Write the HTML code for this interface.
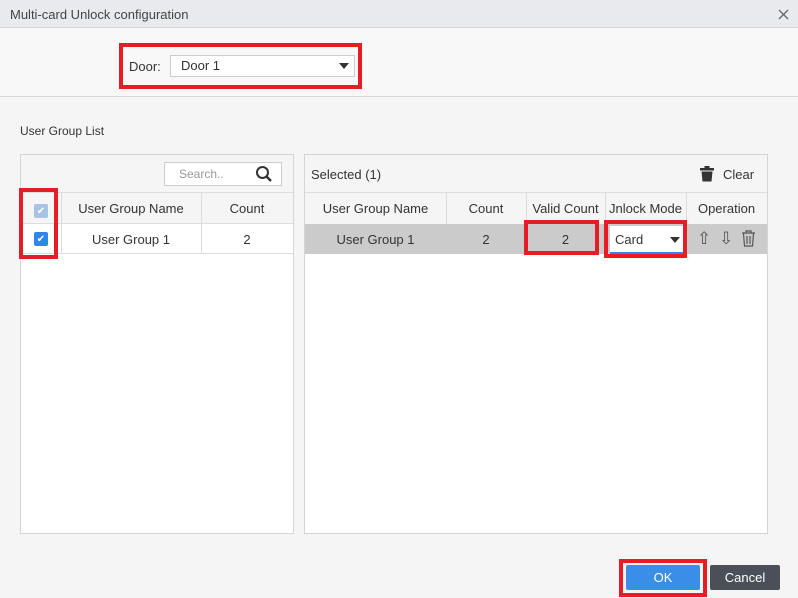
<!DOCTYPE html><html><head><style>
*{margin:0;padding:0;box-sizing:border-box}
body{width:798px;height:598px;position:relative;background:#f5f5f5;font-family:"Liberation Sans",sans-serif;font-size:13px;color:#333;overflow:hidden}
.a{position:absolute}
.c{display:flex;align-items:center;justify-content:center}
.red{position:absolute;border:4px solid #e81c24}
</style></head><body>
<div class="a" style="left:0;top:0;width:798px;height:28px;background:#e8eaed;border-bottom:1px solid #d5d5d5"></div>
<div class="a" style="left:10px;top:7px;font-size:13px;color:#444">Multi-card Unlock configuration</div>
<svg class="a" style="left:778px;top:9px" width="11" height="11"><path d="M1 1L10 10M10 1L1 10" stroke="#666" stroke-width="1.3"/></svg>
<div class="a" style="left:0;top:28px;width:798px;height:69px;background:#f8f8f8;border-bottom:1px solid #d8d8d8"></div>
<div class="red" style="left:119px;top:43px;width:243px;height:46px"></div>
<div class="a" style="left:129px;top:59px">Door:</div>
<div class="a" style="left:170px;top:55px;width:185px;height:22px;background:#fff;border:1px solid #ccc"></div>
<div class="a" style="left:181px;top:58px">Door 1</div>
<div class="a" style="left:339px;top:63px;border-left:5px solid transparent;border-right:5px solid transparent;border-top:6px solid #333"></div>
<div class="a" style="left:20px;top:124px;font-size:12px">User Group List</div>
<div class="a" style="left:20px;top:154px;width:274px;height:380px;background:#fff;border:1px solid #d5d5d5"></div>
<div class="a" style="left:21px;top:155px;width:272px;height:38px;background:#f5f5f5;border-bottom:1px solid #ddd"></div>
<div class="a" style="left:164px;top:162px;width:118px;height:24px;background:#fff;border:1px solid #ccc"></div>
<div class="a" style="left:179px;top:167px;color:#999;font-size:12px">Search..</div>
<svg class="a" style="left:255px;top:165px" width="18" height="18"><circle cx="7.5" cy="7.5" r="5.5" fill="none" stroke="#333" stroke-width="2"/><line x1="11.5" y1="11.5" x2="16" y2="16" stroke="#333" stroke-width="2.4"/></svg>
<div class="a" style="left:21px;top:193px;width:272px;height:31px;background:#f5f5f5;border-bottom:1px solid #ddd"></div>
<div class="a" style="left:61px;top:193px;width:1px;height:61px;background:#ddd"></div>
<div class="a" style="left:201px;top:193px;width:1px;height:61px;background:#ddd"></div>
<div class="a" style="left:21px;top:253px;width:272px;height:1px;background:#ddd"></div>
<div class="a c" style="left:61px;top:193px;width:140px;height:31px">User Group Name</div>
<div class="a c" style="left:201px;top:193px;width:92px;height:31px">Count</div>
<div class="a c" style="left:61px;top:224px;width:140px;height:30px">User Group 1</div>
<div class="a c" style="left:201px;top:224px;width:92px;height:30px">2</div>
<div class="a c" style="left:34px;top:204px;width:14px;height:14px;background:#a9c3e3;color:#fff;font-size:10px;border-radius:2px">✔</div>
<div class="a c" style="left:34px;top:232px;width:14px;height:14px;background:#2f86e8;color:#fff;font-size:10px;border-radius:2px">✔</div>
<div class="red" style="left:19px;top:188px;width:39px;height:71px"></div>
<div class="a" style="left:304px;top:154px;width:464px;height:380px;background:#fff;border:1px solid #d5d5d5"></div>
<div class="a" style="left:305px;top:155px;width:462px;height:38px;background:#f5f5f5;border-bottom:1px solid #ddd"></div>
<div class="a" style="left:311px;top:167px">Selected (1)</div>
<svg class="a" style="left:700px;top:166px" width="14" height="16"><rect x="0" y="2" width="14" height="2.5" fill="#333"/><rect x="4.5" y="0" width="5" height="3" fill="#333"/><path d="M1.5 5.5h11l-1 10h-9z" fill="#333"/></svg>
<div class="a" style="left:723px;top:167px">Clear</div>
<div class="a" style="left:305px;top:193px;width:462px;height:31px;background:#f5f5f5"></div>
<div class="a" style="left:305px;top:224px;width:462px;height:30px;background:#cbcbcb"></div>
<div class="a" style="left:446px;top:193px;width:1px;height:31px;background:#ddd"></div>
<div class="a" style="left:526px;top:193px;width:1px;height:31px;background:#ddd"></div>
<div class="a" style="left:605px;top:193px;width:1px;height:31px;background:#ddd"></div>
<div class="a" style="left:686px;top:193px;width:1px;height:31px;background:#ddd"></div>
<div class="a c" style="left:305px;top:193px;width:141px;height:31px">User Group Name</div>
<div class="a c" style="left:446px;top:193px;width:80px;height:31px">Count</div>
<div class="a c" style="left:526px;top:193px;width:79px;height:31px;white-space:nowrap">Valid Count</div>
<div class="a" style="left:606px;top:193px;width:80px;height:31px;overflow:hidden;line-height:31px;white-space:nowrap;text-indent:3px">Jnlock Mode</div>
<div class="a c" style="left:686px;top:193px;width:81px;height:31px">Operation</div>
<div class="a c" style="left:305px;top:224px;width:141px;height:30px">User Group 1</div>
<div class="a c" style="left:446px;top:224px;width:80px;height:30px">2</div>
<div class="a c" style="left:526px;top:224px;width:79px;height:30px">2</div>
<div class="a" style="left:610px;top:226px;width:73px;height:28px;background:#fff;border-bottom:2px solid #2f86e8"></div>
<div class="a" style="left:615px;top:232px">Card</div>
<div class="a" style="left:670px;top:237px;border-left:5px solid transparent;border-right:5px solid transparent;border-top:6px solid #333"></div>
<div class="a" style="left:697px;top:229px;font-size:17px;color:#555">⇧</div>
<div class="a" style="left:719px;top:229px;font-size:17px;color:#555">⇩</div>
<svg class="a" style="left:741px;top:230px" width="15" height="17"><path d="M1 3h13M5 3V1h5v2M2.5 3.5l1 12.5h8l1-12.5M6 6v8M9 6v8" fill="none" stroke="#555" stroke-width="1.2"/></svg>
<div class="red" style="left:524px;top:220px;width:75px;height:35px"></div>
<div class="red" style="left:604px;top:220px;width:83px;height:38px"></div>
<div class="red" style="left:619px;top:559px;width:88px;height:38px"></div>
<div class="a c" style="left:626px;top:565px;width:74px;height:25px;background:#3a8ee6;color:#fff;border-radius:2px">OK</div>
<div class="a c" style="left:710px;top:565px;width:70px;height:25px;background:#4b5058;color:#fff;border-radius:2px">Cancel</div>
</body></html>
